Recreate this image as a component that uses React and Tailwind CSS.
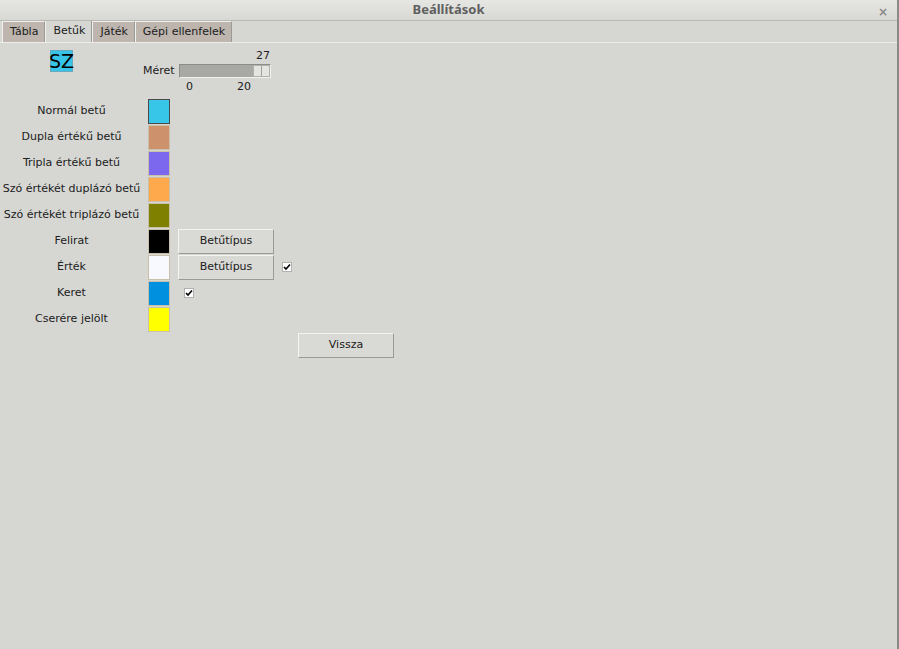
import { useState } from "react";

const font = { fontFamily: '"DejaVu Sans", sans-serif' };

const rows = [
  { label: "Normál betű", color: "bg-[#38c6e8]", border: "border-[#4a4a4a]" },
  { label: "Dupla értékű betű", color: "bg-[#cd916b]" },
  { label: "Tripla értékű betű", color: "bg-[#7b68ee]" },
  { label: "Szó értékét duplázó betű", color: "bg-[#ffa94d]" },
  { label: "Szó értékét triplázó betű", color: "bg-[#808000]" },
  { label: "Felirat", color: "bg-[#000000]", font: true },
  { label: "Érték", color: "bg-[#f8f8ff]", font: true, check: true },
  { label: "Keret", color: "bg-[#0090e0]", check: true },
  { label: "Cserére jelölt", color: "bg-[#ffff00]" },
];

const tabs = ["Tábla", "Betűk", "Játék", "Gépi ellenfelek"];

function Check() {
  return (
    <div className="w-[10px] h-[10px] bg-white border border-[#b0b0b0] flex items-center justify-center">
      <svg width="8" height="8" viewBox="0 0 8 8">
        <path d="M1 4 L3 6 L7 1.5" stroke="#000" strokeWidth="1.6" fill="none" />
      </svg>
    </div>
  );
}

function TkButton({ children }) {
  return (
    <div className="w-[96px] h-[25px] flex items-center justify-center bg-[#d9d9d5] border border-t-[#f4f4f2] border-l-[#f4f4f2] border-b-[#9a9a96] border-r-[#9a9a96] text-[11px] text-[#202020]">
      {children}
    </div>
  );
}

export default function App() {
  const [tab] = useState(1);

  return (
    <div className="w-[899px] h-[649px] bg-[#d6d7d3] flex flex-col border-r-2 border-[#8a8a86] overflow-hidden" style={font}>
      {/* ===== Title bar ===== */}
      <div className="h-[21px] relative flex items-center justify-center bg-gradient-to-b from-[#e6e6e3] to-[#d8d8d4] border-b border-[#b8b8b4]">
        <span className="text-[13px] font-bold text-[#606060]" style={{ fontFamily: '"Noto Sans", sans-serif' }}>Beállítások</span>
        <span className="absolute right-[9px] top-[3px] text-[12px] font-bold text-[#8a8a8a]">×</span>
      </div>

      {/* ===== Tabs ===== */}
      <div className="h-[22px] flex items-end pl-[2px] border-b border-[#ececea]">
        {tabs.map((t, i) => (
          <div
            key={t}
            className={`pl-[7px] pr-[6px] flex items-center text-[11px] text-[#202020] border border-b-0 border-[#f0f0ee] border-r-[#9a9a96] ${
              i === tab ? "h-[22px] bg-[#d6d7d3]" : "h-[21px] bg-[#bdb5ae]"
            }`}
          >
            {t}
          </div>
        ))}
      </div>

      {/* ===== Preview + size ===== */}
      <div className="flex h-[55px]">
        <div className="w-[143px] pt-[7px] pl-[50px]">
          <div className="w-[23px] h-[22px] bg-[#38c4e8] border border-[#6aa8c0] flex items-center justify-center text-[19px] leading-none text-black">
            SZ
          </div>
        </div>
        <div className="flex flex-col pt-[5px]">
          <div className="h-[15px] text-[11px] leading-[15px] text-[#202020] pl-[113px]">27</div>
          <div className="flex items-center h-[16px]">
            <span className="text-[11px] text-[#202020] w-[36px]">Méret</span>
            <div className="w-[92px] h-[14px] bg-[#a8a8a4] border border-t-[#8c8c88] border-l-[#8c8c88] border-b-[#f0f0ee] border-r-[#f0f0ee] flex justify-end">
              <div className="w-[17px] h-full bg-[#e4e4e0] border border-[#b0b0ac] flex">
                <div className="w-1/2 border-r border-[#a0a09c]" />
              </div>
            </div>
          </div>
          <div className="flex h-[16px] items-center text-[11px] text-[#202020] pl-[43px]">
            <span className="w-[51px]">0</span>
            <span>20</span>
          </div>
        </div>
      </div>

      {/* ===== Color rows ===== */}
      <div className="flex flex-col">
        {rows.map((r) => (
          <div key={r.label} className="h-[26px] flex items-center">
            <div className="w-[143px] text-center text-[11px] text-[#202020] whitespace-nowrap">{r.label}</div>
            <div className={`ml-[5px] w-[22px] h-[25px] border ${r.border || "border-[#c8c0a8]"} ${r.color}`} />
            {r.font && (
              <div className="ml-[8px]">
                <TkButton>Betűtípus</TkButton>
              </div>
            )}
            {r.check && (
              <div className={r.font ? "ml-[8px]" : "ml-[14px]"}>
                <Check />
              </div>
            )}
          </div>
        ))}
      </div>

      <div className="pl-[298px] pt-[1px]">
        <TkButton>Vissza</TkButton>
      </div>
    </div>
  );
}
